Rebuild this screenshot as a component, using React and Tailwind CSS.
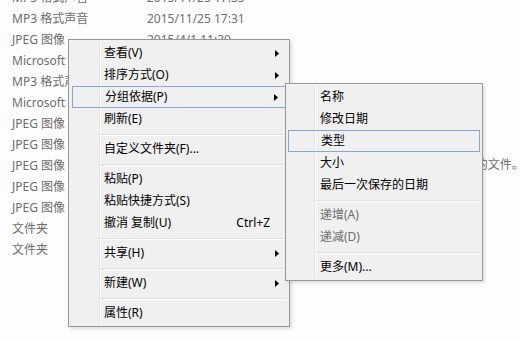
const FILES = [
  ['MP3 格式声音', '2015/11/25 17:35'],
  ['MP3 格式声音', '2015/11/25 17:31'],
  ['JPEG 图像', '2015/4/1 11:30'],
  ['Microsoft Word 文档', '2015/3/20 9:12'],
  ['MP3 格式声音', '2015/3/18 21:04'],
  ['Microsoft Excel 工作表', '2015/3/2 14:47'],
  ['JPEG 图像', '2015/2/27 10:05'],
  ['JPEG 图像', '2015/2/27 10:05'],
  ['JPEG 图像', '2015/2/27 10:04'],
  ['JPEG 图像', '2015/2/27 10:03'],
  ['JPEG 图像', '2015/2/27 10:03'],
  ['文件夹', '2015/1/9 16:20'],
  ['文件夹', '2014/12/30 8:41'],
];

const MAIN = [
  { label: '查看(V)', sub: true },
  { label: '排序方式(O)', sub: true },
  { label: '分组依据(P)', sub: true, active: true },
  { label: '刷新(E)' },
  { sep: true },
  { label: '自定义文件夹(F)...' },
  { sep: true },
  { label: '粘贴(P)' },
  { label: '粘贴快捷方式(S)' },
  { label: '撤消 复制(U)', shortcut: 'Ctrl+Z' },
  { sep: true },
  { label: '共享(H)', sub: true },
  { sep: true },
  { label: '新建(W)', sub: true },
  { sep: true },
  { label: '属性(R)' },
];

const GROUP = [
  { label: '名称' },
  { label: '修改日期' },
  { label: '类型', active: true },
  { label: '大小' },
  { label: '最后一次保存的日期' },
  { sep: true },
  { label: '递增(A)', disabled: true },
  { label: '递减(D)', disabled: true },
  { sep: true },
  { label: '更多(M)...' },
];

function Arrow() {
  return (
    <svg width="4" height="7" viewBox="0 0 4 7" className="ml-auto mr-[8px]">
      <polygon points="0,0 4,3.5 0,7" fill="#000" />
    </svg>
  );
}

function Menu({ items, className, gutter, inset }) {
  return (
    <div className={`absolute border border-[#979797] bg-[#f0f0f0] py-[2px] shadow-[2px_2px_3px_rgba(0,0,0,0.12)] ${className}`}>
      <div className={`absolute top-[2px] bottom-[2px] flex ${gutter}`}>
        <div className="w-px bg-[#e2e3e3]" />
        <div className="w-px bg-white" />
      </div>
      {items.map((it, i) =>
        it.sep ? (
          <div key={i} className={`relative h-[8px] pt-[4px] ${inset.sep}`}>
            <div className="h-px bg-[#e0e0e0]" />
            <div className="h-px bg-white" />
          </div>
        ) : (
          <div
            key={i}
            className={`relative flex h-[22px] items-center pl-[32px] ${inset.item} ${
              it.active ? 'border border-[#84a7d6] pl-[31px]' : ''
            } ${it.disabled ? 'text-[#6d6d6d]' : 'text-black'}`}
          >
            <span>{it.label}</span>
            {it.shortcut && <span className="ml-auto mr-[17px]">{it.shortcut}</span>}
            {it.sub && <Arrow />}
          </div>
        )
      )}
    </div>
  );
}

export default function App() {
  return (
    <div
      className="relative h-[341px] w-[520px] overflow-hidden bg-[#fdfdfd] text-[12px]"
      style={{ fontFamily: '"Noto Sans", "Noto Sans CJK SC", sans-serif' }}
    >
      <div className="flex h-full">
        <div className="w-[262px] -mt-[13px] text-[#6d6d6d]">
          {FILES.map(([type, date], i) => (
            <div key={i} className="flex h-[21px] items-center whitespace-nowrap">
              <span className="w-[147px] shrink-0 pl-[12px]">{type}</span>
              <span>{date}</span>
            </div>
          ))}
        </div>
        <div className="w-px bg-[#e1e7ee]" />
        <div className="flex-1 pl-[171px] pt-[156px] whitespace-nowrap text-[#6d6d6d]">
          选择要预览的文件。
        </div>
      </div>

      <Menu
        items={MAIN}
        className="left-[68px] top-[39px] w-[222px]"
        gutter="left-[30px]"
        inset={{ item: 'ml-[3px] mr-[2px]', sep: 'ml-[31px] mr-[2px]' }}
      />
      <Menu
        items={GROUP}
        className="left-[285px] top-[83px] w-[198px]"
        gutter="left-[28px]"
        inset={{ item: 'mx-[2px]', sep: 'ml-[29px] mr-[2px]' }}
      />
    </div>
  );
}
